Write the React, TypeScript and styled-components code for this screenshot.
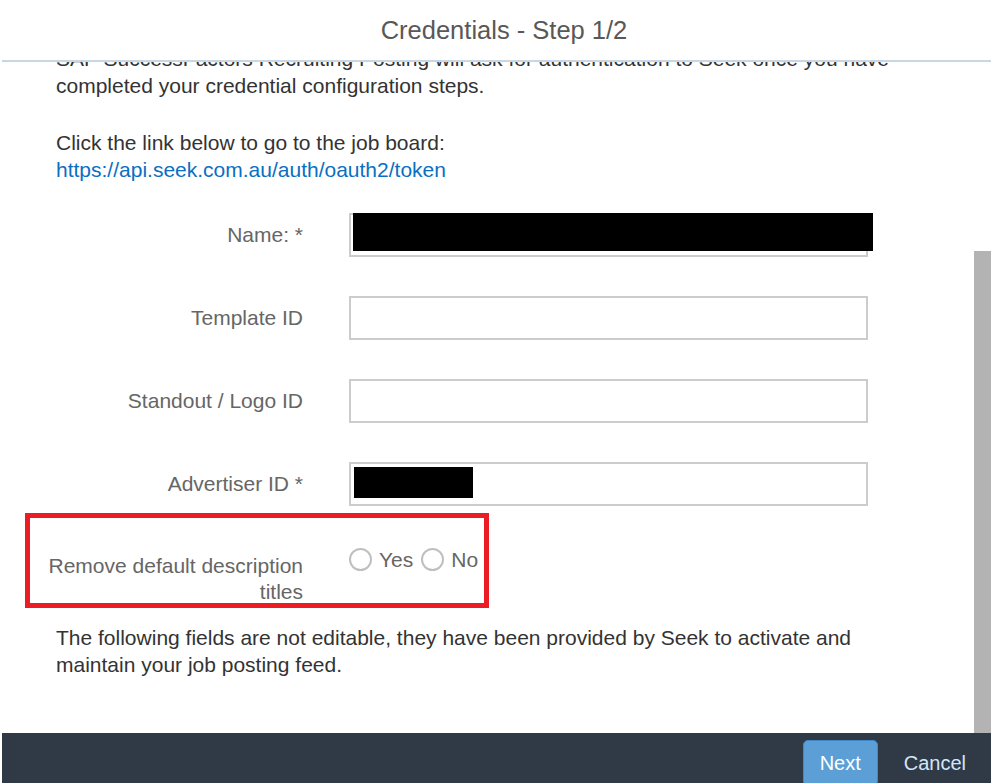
import React, { useLayoutEffect, useRef, useState } from "react";
import styled, { createGlobalStyle } from "styled-components";

const GlobalStyle = createGlobalStyle`
  html, body {
    margin: 0;
    padding: 0;
    height: 100%;
    overflow: hidden;
    background: #ffffff;
  }
  * { box-sizing: border-box; }
`;

const Page = styled.div`
  height: 100vh;
  padding-left: 2px;
  display: flex;
  flex-direction: column;
  font-family: "Liberation Sans", Arial, sans-serif;
  background: #ffffff;
`;

const Header = styled.header`
  flex: 0 0 auto;
  height: 62px;
  padding-left: 15px;
  border-bottom: 2px solid #c7d7e5;
  display: flex;
  align-items: center;
  justify-content: center;
`;

const Title = styled.h1`
  margin: 0;
  font-weight: normal;
  font-size: 25.5px;
  color: #585858;
`;

const BodyFrame = styled.div`
  flex: 1 1 auto;
  min-height: 0;
  display: flex;
`;

const Body = styled.main`
  flex: 1 1 auto;
  min-width: 0;
  overflow-y: auto;
  overflow-x: hidden;
  scrollbar-width: none;
  &::-webkit-scrollbar {
    display: none;
  }
`;

const ScrollTrack = styled.div`
  flex: 0 0 17px;
  position: relative;
  background: #ffffff;
`;

const ScrollThumb = styled.div`
  position: absolute;
  left: 0;
  right: 0;
  background: #b3b3b3;
`;

const Content = styled.div`
  padding: 18px 74px 55px 38px;
  display: flex;
  flex-direction: column;
`;

const Paragraph = styled.p<{ $gap?: number }>`
  margin: 0 0 ${(p) => p.$gap ?? 30}px 16px;
  font-size: 21px;
  line-height: 27px;
  color: #333333;
`;

const Link = styled.a`
  color: #0a6fc2;
  text-decoration: none;
`;

const Form = styled.div`
  display: flex;
  flex-direction: column;
  gap: 39px;
  margin-bottom: 19px;
`;

const Row = styled.div`
  position: relative;
  display: grid;
  grid-template-columns: 263px 519px;
  column-gap: 46px;
  align-items: center;
`;

const TopRow = styled(Row)`
  align-items: start;
`;

const Label = styled.label<{ $top?: number }>`
  text-align: right;
  font-size: 21px;
  line-height: 26px;
  color: #666666;
  padding-top: ${(p) => p.$top ?? 0}px;
`;

const InputCell = styled.div`
  position: relative;
`;

const TextInput = styled.input`
  display: block;
  width: 100%;
  height: 44px;
  border: 2px solid #cccccc;
  background: #ffffff;
  padding: 0 8px;
  font-family: inherit;
  font-size: 18px;
  outline: none;
`;

const Redaction = styled.div`
  position: absolute;
  background: #000000;
`;

const RadioGroup = styled.div`
  display: flex;
  align-items: center;
  gap: 8px;
  padding-top: 1px;
`;

const RadioOption = styled.label`
  display: inline-flex;
  align-items: center;
  gap: 7px;
  font-size: 21px;
  line-height: 27px;
  color: #666666;
`;

const RadioInput = styled.input`
  appearance: none;
  -webkit-appearance: none;
  margin: 0;
  width: 23px;
  height: 23px;
  border: 2px solid #bfbfbf;
  border-radius: 50%;
  background: #ffffff;
`;

const Highlight = styled.div`
  position: absolute;
  left: -15px;
  top: -32px;
  width: 464px;
  height: 95px;
  border: 5px solid #ec1c24;
  pointer-events: none;
`;

const Footer = styled.footer`
  flex: 0 0 50px;
  background: #2f3a46;
  display: flex;
  justify-content: flex-end;
  align-items: flex-start;
  gap: 13px;
  padding: 7px 12px 0 0;
  overflow: hidden;
`;

const FooterButton = styled.button<{ $primary?: boolean }>`
  height: 46px;
  min-width: ${(p) => (p.$primary ? "75px" : "auto")};
  padding: 0 ${(p) => (p.$primary ? "0" : "12px")};
  border-radius: 5px;
  border: 1px solid ${(p) => (p.$primary ? "#4088c8" : "transparent")};
  background: ${(p) => (p.$primary ? "#5b9fd6" : "transparent")};
  color: ${(p) => (p.$primary ? "#ffffff" : "#d3e6f8")};
  font-family: "Liberation Sans", Arial, sans-serif;
  font-size: 20px;
  cursor: pointer;
`;

export default function App() {
  const bodyRef = useRef<HTMLElement>(null);
  const [thumb, setThumb] = useState({ top: 0, height: 0 });

  useLayoutEffect(() => {
    const el = bodyRef.current;
    if (!el) return;
    el.scrollTop = el.scrollHeight;
    const update = () => {
      const { scrollTop, scrollHeight, clientHeight } = el;
      if (scrollHeight <= clientHeight) {
        setThumb({ top: 0, height: 0 });
        return;
      }
      setThumb({
        top: (scrollTop / scrollHeight) * clientHeight,
        height: (clientHeight * clientHeight) / scrollHeight,
      });
    };
    update();
    el.addEventListener("scroll", update);
    return () => el.removeEventListener("scroll", update);
  }, []);

  return (
    <>
      <GlobalStyle />
      <Page>
        <Header>
          <Title>Credentials - Step 1/2</Title>
        </Header>
        <BodyFrame>
          <Body ref={bodyRef}>
            <Content>
              <Paragraph>To connect your account, set up your Seek credentials.</Paragraph>
              <Paragraph>Seek will provide the details you need for this step.</Paragraph>
              <Paragraph>Enter them below exactly as they were provided.</Paragraph>
              <Paragraph>Fields marked with * are required.</Paragraph>
              <Paragraph>
                SAP SuccessFactors Recruiting Posting will ask for authentication to Seek once you have
                completed your credential configuration steps.
              </Paragraph>
              <Paragraph>
                Click the link below to go to the job board:
                <br />
                <Link href="#">https://api.seek.com.au/auth/oauth2/token</Link>
              </Paragraph>

              <Form>
                <Row>
                  <Label>Name: *</Label>
                  <InputCell>
                    <TextInput type="text" />
                    <Redaction style={{ left: 4, top: 0, width: 520, height: 38 }} />
                  </InputCell>
                </Row>
                <Row>
                  <Label>Template ID</Label>
                  <InputCell>
                    <TextInput type="text" />
                  </InputCell>
                </Row>
                <Row>
                  <Label>Standout / Logo ID</Label>
                  <InputCell>
                    <TextInput type="text" />
                  </InputCell>
                </Row>
                <Row>
                  <Label>Advertiser ID *</Label>
                  <InputCell>
                    <TextInput type="text" />
                    <Redaction style={{ left: 5, top: 5, width: 119, height: 31 }} />
                  </InputCell>
                </Row>
                <TopRow>
                  <Highlight />
                  <Label $top={8}>Remove default description titles</Label>
                  <RadioGroup>
                    <RadioOption>
                      <RadioInput type="radio" name="removeTitles" />
                      Yes
                    </RadioOption>
                    <RadioOption>
                      <RadioInput type="radio" name="removeTitles" />
                      No
                    </RadioOption>
                  </RadioGroup>
                </TopRow>
              </Form>

              <Paragraph $gap={0}>
                The following fields are not editable, they have been provided by Seek to activate and
                maintain your job posting feed.
              </Paragraph>
            </Content>
          </Body>
          <ScrollTrack>
            <ScrollThumb style={{ top: thumb.top, height: thumb.height }} />
          </ScrollTrack>
        </BodyFrame>
        <Footer>
          <FooterButton $primary>Next</FooterButton>
          <FooterButton>Cancel</FooterButton>
        </Footer>
      </Page>
    </>
  );
}
